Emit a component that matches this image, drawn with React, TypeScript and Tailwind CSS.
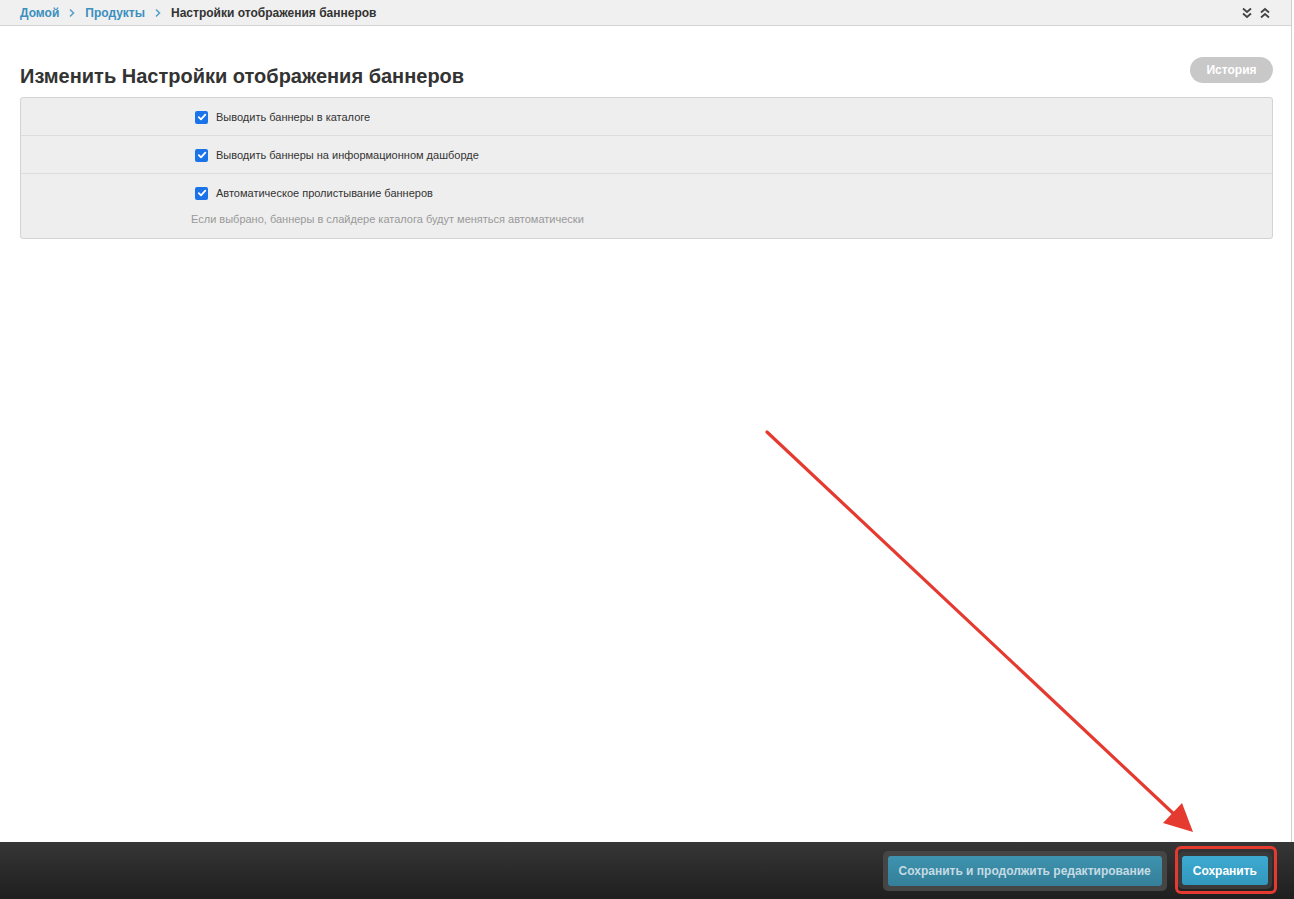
import React from "react";

const Check = () => (
  <span className="inline-flex h-[13px] w-[13px] items-center justify-center rounded-[2px] bg-[#1a73e8]">
    <svg width="10" height="10" viewBox="0 0 10 10">
      <path d="M1.8 5.2 L4 7.4 L8.3 2.6" fill="none" stroke="#fff" strokeWidth="1.8" strokeLinecap="round" strokeLinejoin="round" />
    </svg>
  </span>
);

const Chevron = () => (
  <svg width="8" height="10" viewBox="0 0 8 10" className="mx-[9px]">
    <path d="M2 1.5 L5.5 5 L2 8.5" fill="none" stroke="#5aa0c8" strokeWidth="1.6" />
  </svg>
);

export default function App() {
  return (
    <div
      className="relative flex h-[899px] w-[1294px] flex-col overflow-hidden bg-white"
      style={{ fontFamily: '"Liberation Sans", Arial, sans-serif' }}
    >
      <div className="flex flex-1 flex-col border-r border-[#cfcfcf] w-[1292px]">
        {/* breadcrumb */}
        <div className="flex h-[26px] items-center justify-between border-b border-[#d4d4d4] bg-[#f0f0f0] pl-[20px] pr-[20px]">
          <div className="flex items-center text-[12px] font-bold">
            <span className="text-[#3a8fbf]">Домой</span>
            <Chevron />
            <span className="text-[#3a8fbf]">Продукты</span>
            <Chevron />
            <span className="text-[#333]">Настройки отображения баннеров</span>
          </div>
          <div className="flex items-center gap-[6px] text-[#444]">
            <svg width="12" height="12" viewBox="0 0 12 12">
              <path d="M2 1.5 L6 5 L10 1.5 M2 6.5 L6 10 L10 6.5" fill="none" stroke="#444" strokeWidth="1.8" />
            </svg>
            <svg width="12" height="12" viewBox="0 0 12 12">
              <path d="M2 5.5 L6 2 L10 5.5 M2 10.5 L6 7 L10 10.5" fill="none" stroke="#444" strokeWidth="1.8" />
            </svg>
          </div>
        </div>

        <div className="pl-[20px] pr-[18px] pt-[31px]">
          <div className="flex items-start justify-between">
            <h1 className="text-[20px] font-bold leading-[32px] text-[#333] mt-[3px]">
              Изменить Настройки отображения баннеров
            </h1>
            <div className="flex h-[26px] w-[83px] items-center justify-center rounded-full bg-[#c8c8c8] text-[12px] font-bold text-white">
              История
            </div>
          </div>

          <div className="mt-[5px] rounded-[3px] border border-[#d3d3d3] bg-[#eeeeee]">
            <div className="flex h-[38px] items-center border-b border-[#dcdcdc] pl-[174px] pt-[1px]">
              <Check />
              <span className="ml-[8px] text-[11px] text-[#333]">Выводить баннеры в каталоге</span>
            </div>
            <div className="flex h-[38px] items-center border-b border-[#dcdcdc] pl-[174px] pt-[1px]">
              <Check />
              <span className="ml-[8px] text-[11px] text-[#333]">Выводить баннеры на информационном дашборде</span>
            </div>
            <div className="pl-[170px] pt-[11px] pb-[11px]">
              <div className="flex items-center pl-[4px]">
                <Check />
                <span className="ml-[8px] text-[11px] text-[#333]">Автоматическое пролистывание баннеров</span>
              </div>
              <div className="mt-[9px] text-[11px] text-[#999]">
                Если выбрано, баннеры в слайдере каталога будут меняться автоматически
              </div>
            </div>
          </div>
        </div>
      </div>

      {/* footer */}
      <div className="flex h-[57px] items-center justify-end gap-[11px] bg-gradient-to-b from-[#363636] to-[#1f1f1f] pr-[22px]">
        <div className="rounded-[5px] bg-[#454545] p-[5px]">
          <div className="flex h-[30px] items-center rounded-[3px] bg-gradient-to-b from-[#3e93ae] to-[#347f99] px-[11px] text-[12px] font-bold text-[#c5dbe4]">
            Сохранить и продолжить редактирование
          </div>
        </div>
        <div className="relative rounded-[5px] bg-[#3a3a3a] p-[4px]">
          <div className="flex h-[29px] items-center rounded-[3px] bg-gradient-to-b from-[#3eaad2] to-[#3297bd] px-[11px] text-[12px] font-bold text-white">
            Сохранить
          </div>
          <div className="pointer-events-none absolute -left-[3px] -right-[5px] -top-[6px] -bottom-[5px] rounded-[6px] border-[3px] border-[#e53a2f]" />
        </div>
      </div>

      {/* annotation arrow */}
      <svg className="pointer-events-none absolute left-0 top-0" width="1294" height="899">
        <line x1="767" y1="432" x2="1176" y2="816" stroke="#e53a2f" strokeWidth="3.2" strokeLinecap="round" />
        <polygon points="1163,823 1182,803 1193,832" fill="#e53a2f" />
      </svg>
    </div>
  );
}
